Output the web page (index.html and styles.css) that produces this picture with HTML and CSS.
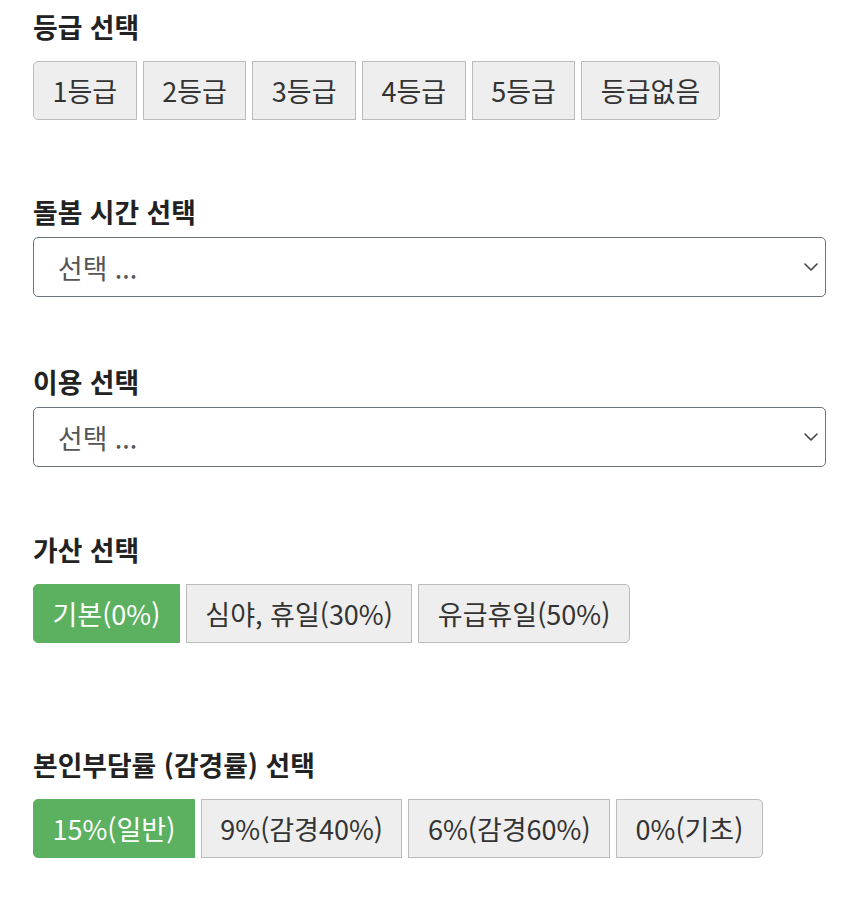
FILE: index.html
```html
<!DOCTYPE html>
<html lang="ko">
<head>
<meta charset="utf-8">
<link rel="stylesheet" href="styles.css">
</head>
<body>
<div class="page">
  <section class="field field-first">
    <div class="label">등급 선택</div>
    <div class="btn-group">
      <button class="btn">1등급</button>
      <button class="btn">2등급</button>
      <button class="btn">3등급</button>
      <button class="btn">4등급</button>
      <button class="btn">5등급</button>
      <button class="btn">등급없음</button>
    </div>
  </section>

  <section class="field field-select1">
    <div class="label label-select">돌봄 시간 선택</div>
    <select class="select"><option>선택 ...</option></select>
  </section>

  <section class="field field-select2">
    <div class="label label-select">이용 선택</div>
    <select class="select"><option>선택 ...</option></select>
  </section>

  <section class="field field-extra">
    <div class="label">가산 선택</div>
    <div class="btn-group">
      <button class="btn active">기본(0%)</button>
      <button class="btn">심야, 휴일(30%)</button>
      <button class="btn">유급휴일(50%)</button>
    </div>
  </section>

  <section class="field field-rate">
    <div class="label">본인부담률 (감경률) 선택</div>
    <div class="btn-group">
      <button class="btn active">15%(일반)</button>
      <button class="btn">9%(감경40%)</button>
      <button class="btn">6%(감경60%)</button>
      <button class="btn">0%(기초)</button>
    </div>
  </section>
</div>
</body>
</html>
```
FILE: styles.css
```css
* { box-sizing: border-box; }
html, body { margin: 0; padding: 0; background: #fff; }
body {
  font-family: "Noto Sans CJK KR", "Noto Sans", sans-serif;
  color: #212529;
}
.page {
  padding: 9px 26px 0 33px;
}
.label {
  font-size: 26.8px;
  font-weight: 700;
  line-height: 36px;
  color: #222;
  margin-bottom: 16px;
}
.label-select { margin-bottom: 7px; }
.field-select1 { margin-top: 74px; }
.field-select2 { margin-top: 67px; }
.field-extra { margin-top: 65px; }
.field-rate { margin-top: 104px; }
.btn-group {
  display: flex;
  gap: 6px;
}
.btn {
  font-family: inherit;
  font-size: 27px;
  line-height: 35px;
  padding: 11px 18.5px;
  border: 1px solid #bbb;
  background: #eee;
  color: #333;
  border-radius: 0;
  margin: 0;
}
.btn:first-child { border-top-left-radius: 5px; border-bottom-left-radius: 5px; }
.btn:last-child { border-top-right-radius: 5px; border-bottom-right-radius: 5px; }
.btn.active {
  background: #5cb160;
  border-color: #5cb160;
  color: #fff;
}
.select {
  display: block;
  width: 100%;
  height: 60px;
  font-family: inherit;
  font-size: 26.8px;
  color: #555;
  padding: 0 40px 0 24px;
  border: 1px solid #6c757d;
  border-radius: 5px;
  background-color: #fff;
  appearance: none;
  -webkit-appearance: none;
  background-image: url("data:image/svg+xml,%3csvg xmlns='http://www.w3.org/2000/svg' viewBox='0 0 14 8'%3e%3cpath fill='none' stroke='%23444' stroke-linecap='round' stroke-linejoin='round' stroke-width='1.6' d='M1 1l6 6 6-6'/%3e%3c/svg%3e");
  background-repeat: no-repeat;
  background-position: right 7px center;
  background-size: 14px 8px;
}
```
